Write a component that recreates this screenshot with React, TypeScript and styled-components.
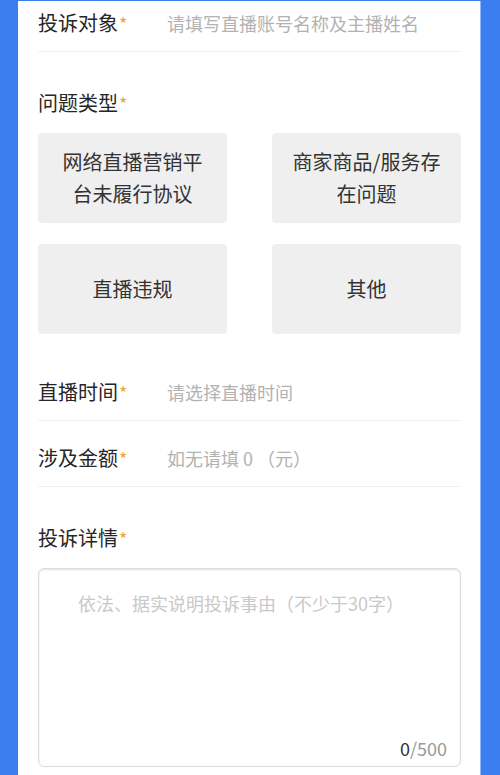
import React from 'react';
import styled, { createGlobalStyle } from 'styled-components';

const GlobalStyle = createGlobalStyle`
  html, body {
    margin: 0;
    padding: 0;
    background: #3b7ef1;
    overflow: hidden;
  }
  * {
    box-sizing: border-box;
  }
`;

const FONT = `"PingFang SC", "Noto Sans CJK SC", "Noto Sans", sans-serif`;

const categories = ['网络直播营销平台未履行协议', '商家商品/服务存在问题', '直播违规', '其他'];

const App = () => {
  return (
    <>
      <GlobalStyle />
      <Page>
        <Panel>
          <Form>
            <Row>
              <Label>
                投诉对象<Star>*</Star>
              </Label>
              <Input placeholder="请填写直播账号名称及主播姓名" />
            </Row>

            <SectionTitle>
              问题类型<Star>*</Star>
            </SectionTitle>
            <Grid>
              {categories.map((c) => (
                <Choice key={c}>{c}</Choice>
              ))}
            </Grid>

            <Row>
              <Label>
                直播时间<Star>*</Star>
              </Label>
              <Input placeholder="请选择直播时间" readOnly />
            </Row>
            <Row>
              <Label>
                涉及金额<Star>*</Star>
              </Label>
              <Input placeholder="如无请填 0 （元）" />
            </Row>

            <SectionTitle>
              投诉详情<Star>*</Star>
            </SectionTitle>
            <TextBox>
              <TextArea placeholder="依法、据实说明投诉事由（不少于30字）" />
              <Counter>
                <b>0</b>/500
              </Counter>
            </TextBox>
          </Form>
        </Panel>
      </Page>
    </>
  );
};

export default App;

const Page = styled.div`
  height: 775px;
  padding: 1px 20px 0 18px;
  background: #3b7ef1;
`;

const Panel = styled.div`
  height: 100%;
  background: #ffffff;
  padding: 0 19px 0 20px;
  overflow: hidden;
  box-shadow: 1px 0 0 #8fb6f7;
`;

const Form = styled.div`
  margin-top: -15px; /* page is scrolled a little */
  font-family: ${FONT};
  color: #333;
`;

const Row = styled.div`
  display: flex;
  align-items: center;
  height: 66px;
  padding-top: 8px;
  border-bottom: 1px solid #f1f1f1;
`;

const Label = styled.div`
  width: 129px;
  flex: none;
  font-size: 20px;
  line-height: 26px;
  color: #262626;
`;

const Star = styled.span`
  color: #f2a23a;
  font-size: 18px;
  margin-left: 1px;
`;

const Input = styled.input`
  flex: 1;
  min-width: 0;
  border: none;
  outline: none;
  padding: 0;
  background: transparent;
  font-family: ${FONT};
  font-size: 18px;
  color: #333;

  &::placeholder {
    color: #b2b2b2;
  }
`;

const SectionTitle = styled.div`
  padding-top: 38px;
  margin-bottom: 17px;
  font-size: 20px;
  line-height: 26px;
  color: #262626;
`;

const Grid = styled.div`
  display: grid;
  grid-template-columns: 1fr 1fr;
  grid-auto-rows: 90px;
  column-gap: 45px;
  row-gap: 21px;
  margin-bottom: 21px;
`;

const Choice = styled.div`
  display: flex;
  align-items: center;
  justify-content: center;
  padding: 0 18px;
  background: #efefef;
  border-radius: 4px;
  text-align: center;
  font-size: 20px;
  line-height: 32px;
  color: #333;
`;

const TextBox = styled.div`
  height: 199px;
  border: 1px solid #dcdcdc;
  border-radius: 6px;
  box-shadow: inset 0 1px 2px rgba(0, 0, 0, 0.12);
  padding: 21px 13px 6px 39px;
  display: flex;
  flex-direction: column;
`;

const TextArea = styled.textarea`
  flex: 1;
  border: none;
  outline: none;
  resize: none;
  padding: 0;
  background: transparent;
  font-family: ${FONT};
  font-size: 18px;
  line-height: 26px;
  color: #333;

  &::placeholder {
    color: #c9c9c9;
  }
`;

const Counter = styled.div`
  text-align: right;
  font-family: ${FONT};
  font-size: 18px;
  line-height: 24px;
  color: #9a9a9a;

  b {
    font-weight: normal;
    color: #333;
  }
`;
